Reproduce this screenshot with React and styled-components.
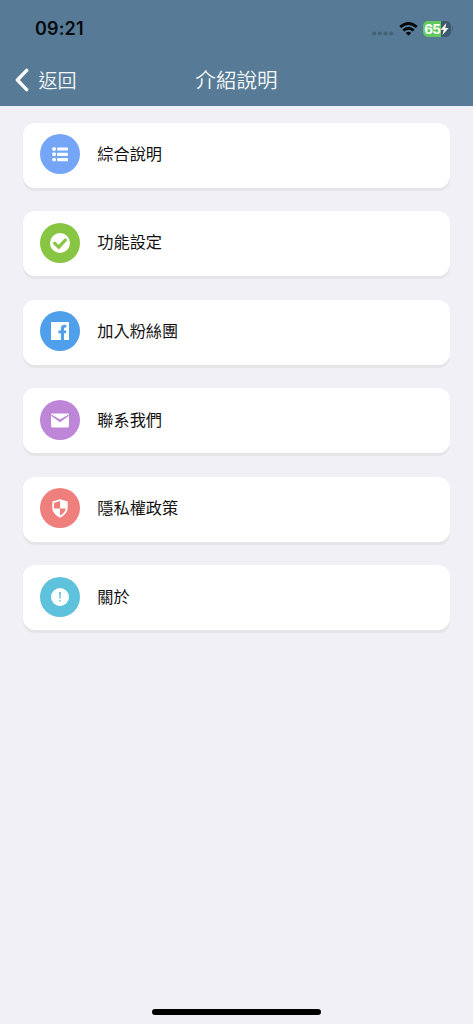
import React from "react";
import styled, {createGlobalStyle} from "styled-components";


const GlobalStyle = createGlobalStyle`
  body {
    margin: 0;
    background-color: #f1f0f6;
    font-family: "Noto Sans CJK TC", sans-serif;
  }
`;

const Screen = styled.div`
  display: flex;
  flex-direction: column;
  height: 1024px;
  overflow: hidden;
  background-color: #f1f0f6;
`;

const Header = styled.header`
  height: 105.5px;
  background-color: #577b96;
`;

const StatusBar = styled.div`
  display: flex;
  align-items: center;
  justify-content: space-between;
  height: 57px;
  padding: 0 20px 0 35px;
`;

const Clock = styled.span`
  font-family: Inter, sans-serif;
  font-size: 18px;
  font-weight: 600;
  line-height: 22px;
  letter-spacing: 0.15px;
  color: #060a0d;
`;

const StatusIcons = styled.div`
  display: flex;
  align-items: center;

  svg {
    display: block;
  }
`;

const Dots = styled.svg`
  margin: 9px 5px 0 0;
`;

const Battery = styled.div`
  display: flex;
  align-items: center;
  justify-content: center;
  width: 27.5px;
  height: 16px;
  margin-left: 5px;
  border-radius: 5px;
  background: linear-gradient(to right, #62c95c 65%, #3f596c 65%);
  font-family: Inter, sans-serif;
  font-size: 13.5px;
  font-weight: 700;
  line-height: 16px;
  letter-spacing: -0.7px;
  color: #fff;
`;

const BatteryTip = styled.span`
  width: 1.5px;
  height: 5px;
  margin-left: 1px;
  border-radius: 0 2px 2px 0;
  background-color: #456176;
`;

const NavBar = styled.nav`
  display: grid;
  grid-template-columns: 1fr auto 1fr;
  align-items: center;
  height: 46px;
  padding: 0 15px;
  color: #f4f7f9;
`;

const BackButton = styled.button`
  display: flex;
  align-items: center;
  padding: 0;
  border: none;
  background: none;
  font-family: inherit;
  font-size: 19px;
  font-weight: 350;
  line-height: 28px;
  color: inherit;

  svg {
    margin-right: 9.5px;
  }
`;

const Title = styled.h1`
  margin: 0 0 2px;
  font-size: 20.6px;
  font-weight: 350;
  line-height: 30px;
`;

const Menu = styled.main`
  display: flex;
  flex: 1;
  flex-direction: column;
  gap: 23.6px;
  padding: 17px 23px 0;
`;

const MenuCard = styled.div`
  display: flex;
  align-items: center;
  box-sizing: border-box;
  height: 65px;
  padding: 0 17px 2px;
  border-radius: 12px;
  background-color: #fff;
  box-shadow: 0 3px 1px #e5e5e7;
`;

const IconCircle = styled.div`
  display: flex;
  align-items: center;
  justify-content: center;
  width: 40px;
  height: 40px;
  margin-right: 17.3px;
  border-radius: 50%;
  background-color: ${props => props.$color};
`;

const Label = styled.span`
  margin-bottom: 2.4px;
  font-size: 16.2px;
  line-height: 24px;
  color: #111;
`;

const HomeArea = styled.footer`
  display: flex;
  justify-content: center;
  padding-bottom: 9px;
`;

const HomeIndicator = styled.div`
  width: 169px;
  height: 6px;
  border-radius: 3px;
  background-color: #000;
`;

const ListIcon = () => (
    <svg width="20" height="20" viewBox="0 0 20 20" fill="#fff">
        <rect x="2.3" y="3.3" width="3.5" height="3.4" rx="1" />
        <rect x="7" y="3.4" width="11" height="3.2" rx="1" />
        <rect x="2.3" y="8.6" width="3.5" height="3.4" rx="1" />
        <rect x="7" y="8.7" width="11" height="3.2" rx="1" />
        <rect x="2.3" y="13.9" width="3.5" height="3.4" rx="1" />
        <rect x="7" y="14" width="11" height="3.2" rx="1" />
    </svg>
);

const CheckIcon = () => (
    <svg width="20" height="20" viewBox="0 0 20 20">
        <circle cx="10" cy="10" r="10" fill="#fff" />
        <path d="M3.7 9.3 L8.7 14.2 L16.3 6" fill="none" stroke="#88c543" strokeWidth="3.2" />
    </svg>
);

const FacebookIcon = () => (
    <svg width="20" height="20" viewBox="0 0 20 20">
        <path
            d="M1.8 1H18.2Q19 1 19 1.8V18.2Q19 19 18.2 19H14V12.3H16L16.4 9.5H14V8Q14 6.6 15.2 6.6H16.4V3.8H14.5Q10.9 3.8 10.9 7.5V9.5H8.4V12.3H10.9V19H1.8Q1 19 1 18.2V1.8Q1 1 1.8 1Z"
            fill="#fff"
        />
    </svg>
);

const MailIcon = () => (
    <svg width="20" height="20" viewBox="0 0 20 20">
        <rect x="1" y="3.4" width="18" height="14" rx="1.4" fill="#fff" />
        <path d="M1.4 4.4 L10 9.6 L18.6 4.4 V6 L10 12.2 L1.4 6 Z" fill="#be86d8" />
    </svg>
);

const ShieldIcon = () => (
    <svg width="20" height="20" viewBox="0 0 20 20">
        <path d="M10 1.2 L17.7 3.6 V9.6 C17.7 14.4 14 17.7 10 19.8 C6 17.7 2.3 14.4 2.3 9.6 V3.6 Z" fill="#fff" />
        <path d="M10 3 V10.4 H4 V4.9 Z" fill="#ee7f7d" />
        <path d="M10 10.4 H15.8 C15.3 13.4 13.2 15.8 10 17.7 Z" fill="#ee7f7d" />
    </svg>
);

const InfoIcon = () => (
    <svg width="20" height="20" viewBox="0 0 20 20">
        <circle cx="10" cy="10" r="9" fill="#fff" />
        <path d="M9.1 5 H10.9 L10.5 12 H9.5 Z" fill="#5fc2dc" />
        <circle cx="10" cy="13.8" r="0.9" fill="#5fc2dc" />
    </svg>
);

const DotsIcon = () => (
    <Dots width="22" height="5" viewBox="0 0 22 5" fill="#456277">
        <circle cx="2.2" cy="2.5" r="2.1" />
        <circle cx="7.9" cy="2.5" r="2.1" />
        <circle cx="13.6" cy="2.5" r="2.1" />
        <circle cx="19.3" cy="2.5" r="2.1" />
    </Dots>
);

const WifiIcon = () => (
    <svg width="19" height="14" viewBox="0 0 19 14" fill="none" stroke="#05080a" strokeWidth="2.7">
        <path d="M1.2 5.1 Q9.5 -2.1 17.8 5.1" />
        <path d="M4.3 8.5 Q9.5 4 14.7 8.5" />
        <path d="M9.5 13.8 L6.7 11 Q9.5 8.6 12.3 11 Z" fill="#05080a" stroke="none" />
    </svg>
);

const BoltIcon = () => (
    <svg width="9" height="12" viewBox="0 0 8 11" fill="#fff">
        <path d="M5.8 0 L0.3 6.1 H3.4 L2.1 11 L7.8 4.6 H4.6 Z" />
    </svg>
);

const BackIcon = () => (
    <svg width="14" height="24" viewBox="0 0 14 24" fill="none" stroke="#fff" strokeWidth="3.4">
        <path d="M11.7 2.4 L2.4 12 L11.7 21.6" strokeLinecap="round" strokeLinejoin="round" />
    </svg>
);

const menuItems = [
    {label: "綜合說明", color: "#75a5f7", Icon: ListIcon},
    {label: "功能設定", color: "#88c543", Icon: CheckIcon},
    {label: "加入粉絲團", color: "#509feb", Icon: FacebookIcon},
    {label: "聯系我們", color: "#be86d8", Icon: MailIcon},
    {label: "隱私權政策", color: "#ee7f7d", Icon: ShieldIcon},
    {label: "關於", color: "#5fc2dc", Icon: InfoIcon},
];

const App = () => {
    return (
        <Screen lang="zh-Hant">
            <GlobalStyle />
            <Header>
                <StatusBar>
                    <Clock>09:21</Clock>
                    <StatusIcons>
                        <DotsIcon />
                        <WifiIcon />
                        <Battery>
                            65 <BoltIcon />
                        </Battery>
                        <BatteryTip />
                    </StatusIcons>
                </StatusBar>
                <NavBar>
                    <BackButton>
                        <BackIcon /> 返回
                    </BackButton>
                    <Title>介紹說明</Title>
                </NavBar>
            </Header>
            <Menu>
                {menuItems.map(({label, color, Icon}) => (
                    <MenuCard key={label}>
                        <IconCircle $color={color}>
                            <Icon />
                        </IconCircle>
                        <Label>{label}</Label>
                    </MenuCard>
                ))}
            </Menu>
            <HomeArea>
                <HomeIndicator />
            </HomeArea>
        </Screen>
    );
};

export default App;
